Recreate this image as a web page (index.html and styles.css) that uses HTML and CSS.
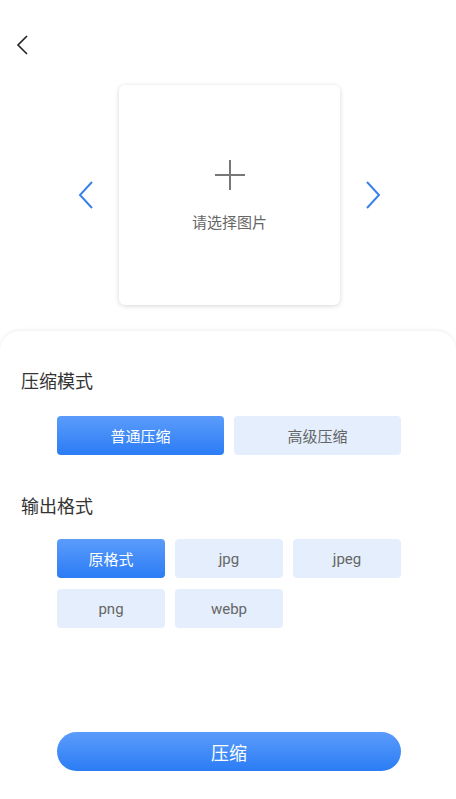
FILE: index.html
```html
<!DOCTYPE html>
<html lang="zh-CN">
<head>
    <meta charset="UTF-8">
    <meta name="viewport" content="width=device-width, initial-scale=1.0">
    <title>图片压缩</title>
    <link rel="stylesheet" href="styles.css">
</head>
<body>
    <header class="topbar">
        <button class="back" aria-label="返回">
            <svg width="12" height="20" viewBox="0 0 12 20"><path d="M11 1 L2 10 L11 19" fill="none" stroke="#222" stroke-width="1.6"/></svg>
        </button>
    </header>

    <section class="picker">
        <button class="arrow" aria-label="上一张">
            <svg width="15" height="28" viewBox="0 0 15 28"><path d="M14 1 L2 14 L14 27" fill="none" stroke="#3a82ea" stroke-width="2"/></svg>
        </button>
        <div class="card">
            <svg class="plus" width="32" height="32" viewBox="0 0 32 32"><path d="M16 1 V31 M1 16 H31" stroke="#777" stroke-width="2"/></svg>
            <p class="hint">请选择图片</p>
        </div>
        <button class="arrow" aria-label="下一张">
            <svg width="15" height="28" viewBox="0 0 15 28"><path d="M1 1 L13 14 L1 27" fill="none" stroke="#3a82ea" stroke-width="2"/></svg>
        </button>
    </section>

    <main class="panel">
        <h2 class="title">压缩模式</h2>
        <div class="modes">
            <button class="opt active">普通压缩</button>
            <button class="opt">高级压缩</button>
        </div>

        <h2 class="title title-format">输出格式</h2>
        <div class="formats">
            <button class="opt active">原格式</button>
            <button class="opt">jpg</button>
            <button class="opt">jpeg</button>
            <button class="opt">png</button>
            <button class="opt">webp</button>
        </div>

        <button class="submit">压缩</button>
    </main>
</body>
</html>
```

FILE: styles.css
```css
* {
    box-sizing: border-box;
}

body {
    margin: 0;
    background: #fff;
    font-family: Roboto, "Noto Sans CJK SC", sans-serif;
    color: #333;
}

button {
    font-family: inherit;
    border: none;
    background: none;
    padding: 0;
    cursor: pointer;
}

.topbar {
    height: 85px;
    padding: 35px 0 0 15px;
}

.back {
    display: block;
    width: 14px;
    height: 22px;
}

.picker {
    display: flex;
    justify-content: center;
    align-items: center;
    gap: 26px;
    padding-left: 3px;
}

.arrow {
    width: 15px;
    height: 40px;
    display: flex;
    align-items: center;
    justify-content: center;
}

.card {
    width: 221px;
    height: 220px;
    background: #fff;
    border-radius: 6px;
    box-shadow: 0 1px 5px rgba(0, 0, 0, 0.16);
    display: flex;
    flex-direction: column;
    align-items: center;
    padding-top: 74px;
}

.plus {
    display: block;
}

.hint {
    margin: 21px 0 0;
    font-size: 15px;
    line-height: 22px;
    color: #666;
}

.panel {
    margin-top: 26px;
    border-radius: 20px 20px 0 0;
    box-shadow: 0 -1px 4px rgba(0, 0, 0, 0.07);
    padding: 38px 0 28px;
    min-height: 468px;
}

.title {
    margin: 0 0 21px 21px;
    font-size: 18px;
    font-weight: normal;
    line-height: 26px;
    color: #333;
}

.title-format {
    margin-top: 39px;
    margin-bottom: 19px;
}

.modes,
.formats {
    display: grid;
    width: 344px;
    margin-left: 57px;
    column-gap: 10px;
    row-gap: 11px;
}

.modes {
    grid-template-columns: repeat(2, 1fr);
}

.formats {
    grid-template-columns: repeat(3, 108px);
}

.opt {
    height: 39px;
    border-radius: 4px;
    background: #e4eefc;
    color: #666;
    font-size: 15px;
}

.opt.active {
    background: linear-gradient(#5b9cfb, #2b7cf5);
    color: #fff;
}

.submit {
    display: block;
    width: 344px;
    height: 39px;
    margin: 104px 0 0 57px;
    border-radius: 20px;
    background: linear-gradient(#5b9cfb, #2b7cf5);
    color: #fff;
    font-size: 18px;
}
```
